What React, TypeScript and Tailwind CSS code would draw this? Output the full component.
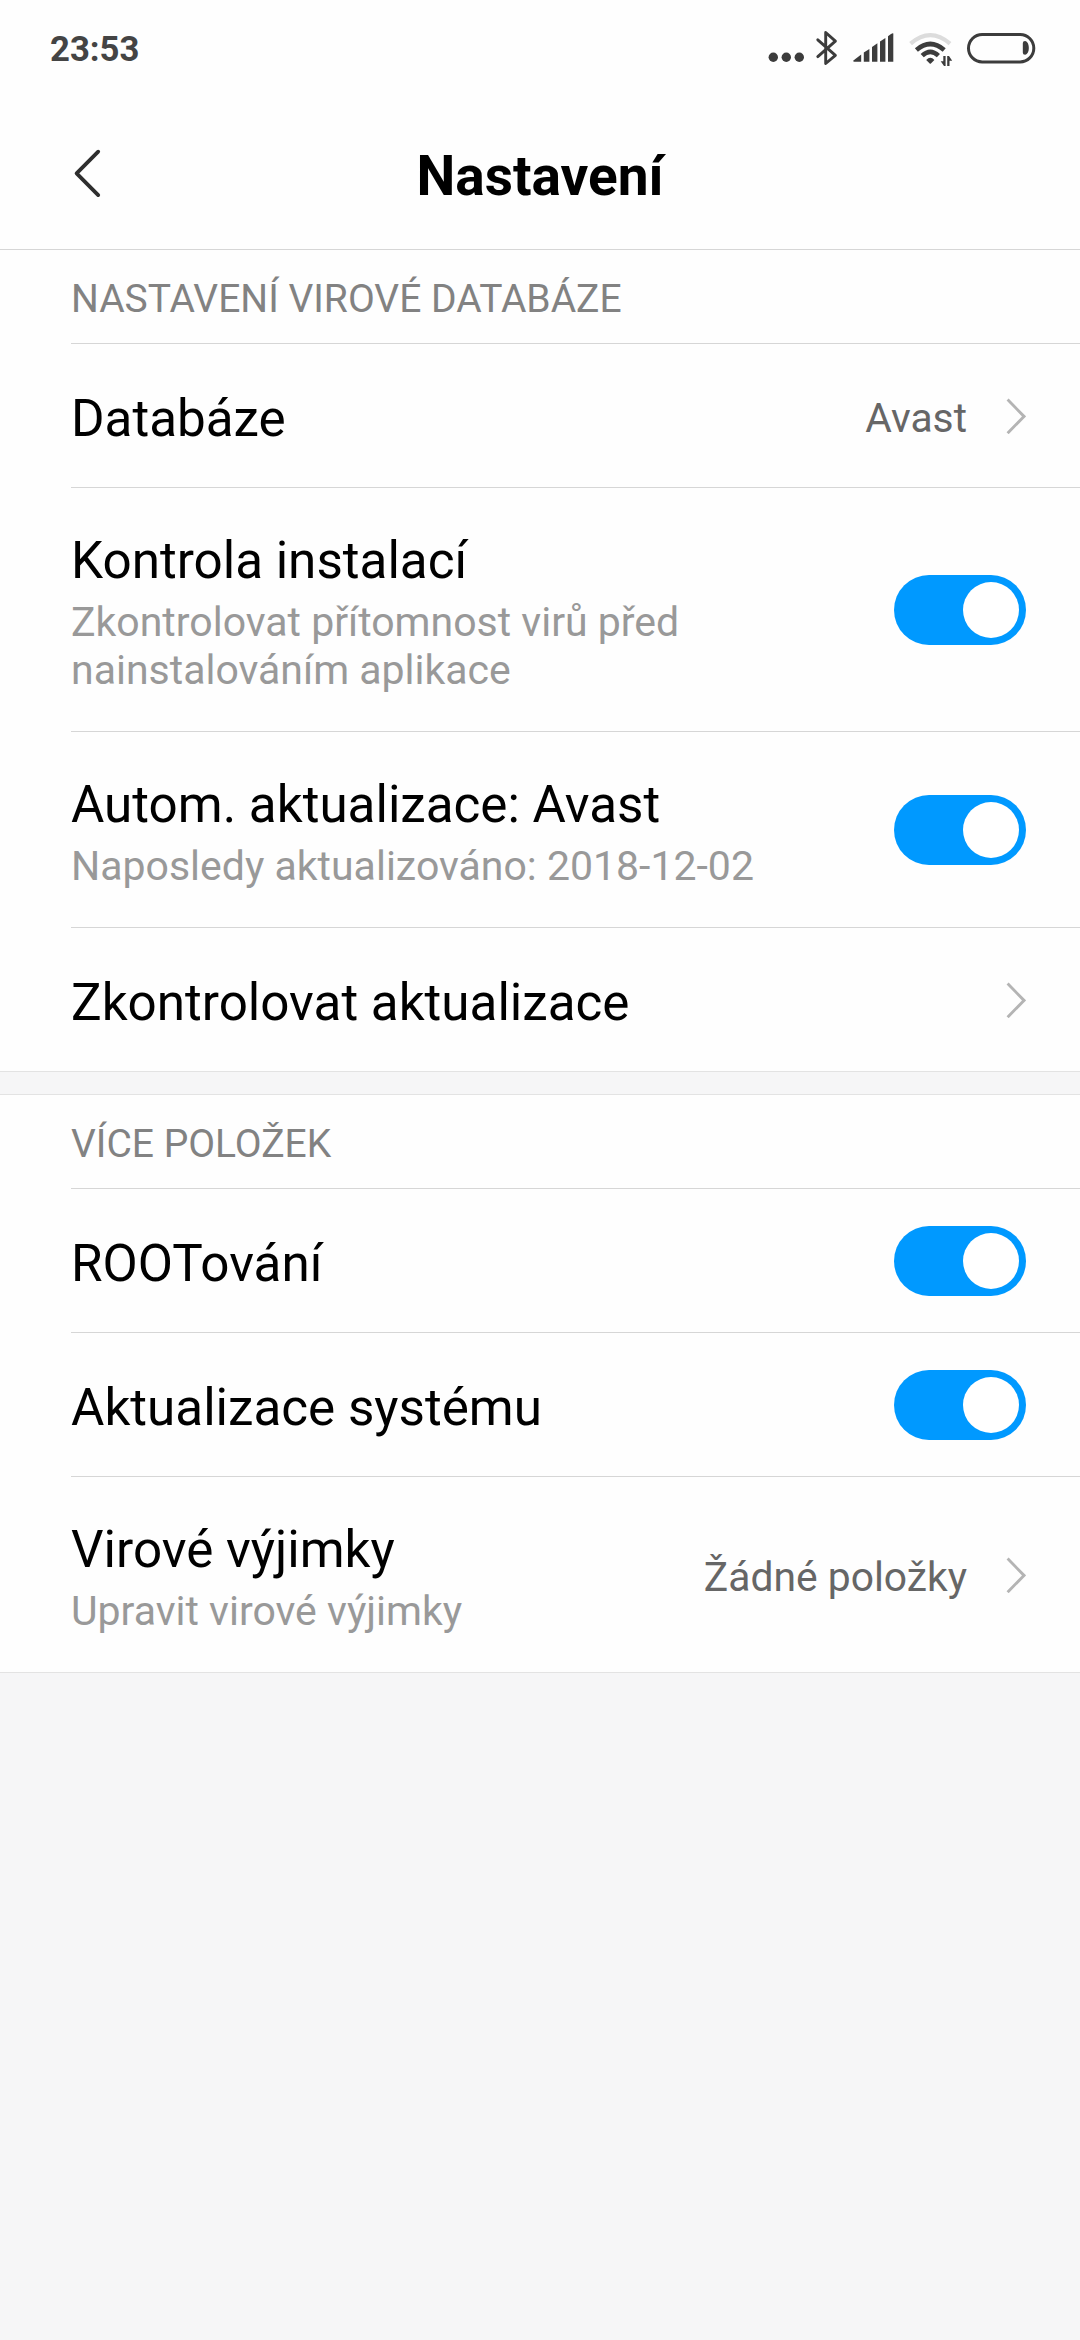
import type { ReactNode } from "react";

function StatusBar() {
  return (
    <div className="flex h-[95px] items-start justify-between pl-[50px] pr-[44px] text-[#3c3c3c]">
      <span className="mt-[28px] text-[34.7px] leading-[42px] font-bold text-[#444444]">23:53</span>
      <div className="mt-[30px] flex h-9 items-start">
        <svg className="w-[36px] h-9" viewBox="768 30 36 36" fill="currentColor">
          <circle cx="773.3" cy="57.3" r="4.7" />
          <circle cx="786.3" cy="57.3" r="4.7" />
          <circle cx="799.3" cy="57.3" r="4.7" />
        </svg>
        <svg className="ml-[10px] w-[26px] h-9" viewBox="814 30 26 36" fill="none" stroke="currentColor" strokeWidth="2.9" strokeLinecap="round" strokeLinejoin="round">
          <path d="M817.8 39.8 835.4 55.3 825.7 63.5V32.5L835.4 41.2 817.8 56.6" />
        </svg>
        <svg className="ml-[12px] w-[42px] h-9" viewBox="852 30 42 36" fill="currentColor">
          <path d="M853.4 60.6 861.2 54.4V61.8H854.2Q852.4 61.6 853.4 60.6Z" />
          <path d="M863.8 52.6 869.4 49V61.8H863.8Z" />
          <path d="M872 47 877.4 43.3V61.8H872Z" />
          <path d="M880 41.6 885.4 38V61.8H880Z" />
          <path d="M888 36.2Q892.4 32.6 893.3 33.4V61.8H888Z" />
        </svg>
        <svg className="ml-[14px] w-[46px] h-[37px]" viewBox="908 30 46 37" fill="none" stroke="currentColor">
          <path d="M910.6 43.6Q930.3 26.6 950 43.6" stroke="#dcdcdc" strokeWidth="4.2" />
          <path d="M916.4 50Q930.3 38 944.2 50" strokeWidth="4.6" />
          <path d="M922.2 55.6Q930.3 48 938.4 55.6" strokeWidth="4.6" />
          <path d="M926.2 60Q930.3 55.4 934.4 60L930.9 63.4Q930.3 63.9 929.7 63.4Z" fill="currentColor" stroke="none" />
          <path d="M943.3 56H945.6V66H944L940.7 61.2H943.3ZM947.2 66V56H949L952.2 60.8H949.5V66Z" fill="currentColor" stroke="none" />
        </svg>
        <svg className="ml-[12px] w-[70px] h-9" viewBox="966 30 70 36">
          <rect x="968.5" y="34.5" width="65.3" height="27.4" rx="13.7" fill="none" stroke="currentColor" strokeWidth="3" />
          <path d="M1025 41C1027.6 41.4 1028.8 44.6 1028.8 48S1027.6 54.4 1025 54.8Q1022.8 54.8 1022.8 52.6V43.2Q1022.8 41 1025 41Z" fill="currentColor" />
        </svg>
      </div>
    </div>
  );
}

function Header() {
  return (
    <div className="grid h-[154px] grid-cols-[72px_1fr_72px] items-start">
      <svg className="mt-[51px] ml-[72px] h-[56px] w-[32px]" viewBox="72 146 32 56" fill="none" stroke="#2e2e2e" strokeWidth="3.8" strokeLinecap="round" strokeLinejoin="round">
        <path d="M98.2 151.7 76.6 173.4 98.2 195.1" />
      </svg>
      <h1 className="mt-[49px] text-center text-[55px] leading-[64px] font-bold text-black">Nastavení</h1>
    </div>
  );
}

function SectionTitle({ children }: { children: ReactNode }) {
  return <h2 className="h-[93px] pt-[26px] pl-[71px] text-[39px] leading-[46px] text-[#828282]">{children}</h2>;
}

function Toggle() {
  return (
    <span className="flex h-[70px] w-[132px] shrink-0 items-center justify-end rounded-full bg-[#0099ff] pr-[7px]">
      <span className="size-[56px] rounded-full bg-white" />
    </span>
  );
}

function Chevron() {
  return (
    <svg className="h-[36px] w-[20px] shrink-0" viewBox="0 0 20 36" fill="none" stroke="#b4b4b4" strokeWidth="2.9">
      <path d="M1.6 1.6 18 18.4 1.6 35.2" />
    </svg>
  );
}

type RowProps = { title: string; detail?: string; value?: string; toggle?: boolean };

function Row({ title, detail, value, toggle }: RowProps) {
  return (
    <div className="ml-[71px] flex items-center border-t border-[#d6d6d6] pr-[54px]">
      <div className={detail ? "flex-1 pt-[43px] pb-[37px]" : "flex-1 pt-[45px] pb-[38px]"}>
        <div className="text-[51.2px] leading-[60px] text-black">{title}</div>
        {detail && <div className="mt-[7px] max-w-[700px] text-[41px] leading-[48px] whitespace-pre-line text-[#999999]">{detail}</div>}
      </div>
      {value && <span className="mr-[39px] pt-[5px] text-[40.8px] leading-[48px] text-[#666666]">{value}</span>}
      {toggle ? <Toggle /> : <Chevron />}
    </div>
  );
}

export default function App() {
  return (
    <div className="min-h-[2340px] w-[1080px] bg-[#f6f6f7] font-[Roboto,sans-serif]">
      <div className="bg-[#fefefe]">
        <StatusBar />
        <Header />
      </div>
      <section className="border-t border-[#d6d6d6] bg-[#fefefe]">
        <SectionTitle>NASTAVENÍ VIROVÉ DATABÁZE</SectionTitle>
        <Row title="Databáze" value="Avast" />
        <Row title="Kontrola instalací" detail={"Zkontrolovat přítomnost virů před\nnainstalováním aplikace"} toggle />
        <Row title="Autom. aktualizace: Avast" detail="Naposledy aktualizováno: 2018-12-02" toggle />
        <Row title="Zkontrolovat aktualizace" />
      </section>
      <div className="h-[23px] border-t border-[#e3e3e3]" />
      <section className="border-y border-[#e3e3e3] bg-[#fefefe]">
        <SectionTitle>VÍCE POLOŽEK</SectionTitle>
        <Row title="ROOTování" toggle />
        <Row title="Aktualizace systému" toggle />
        <Row title="Virové výjimky" detail="Upravit virové výjimky" value="Žádné položky" />
      </section>
    </div>
  );
}
